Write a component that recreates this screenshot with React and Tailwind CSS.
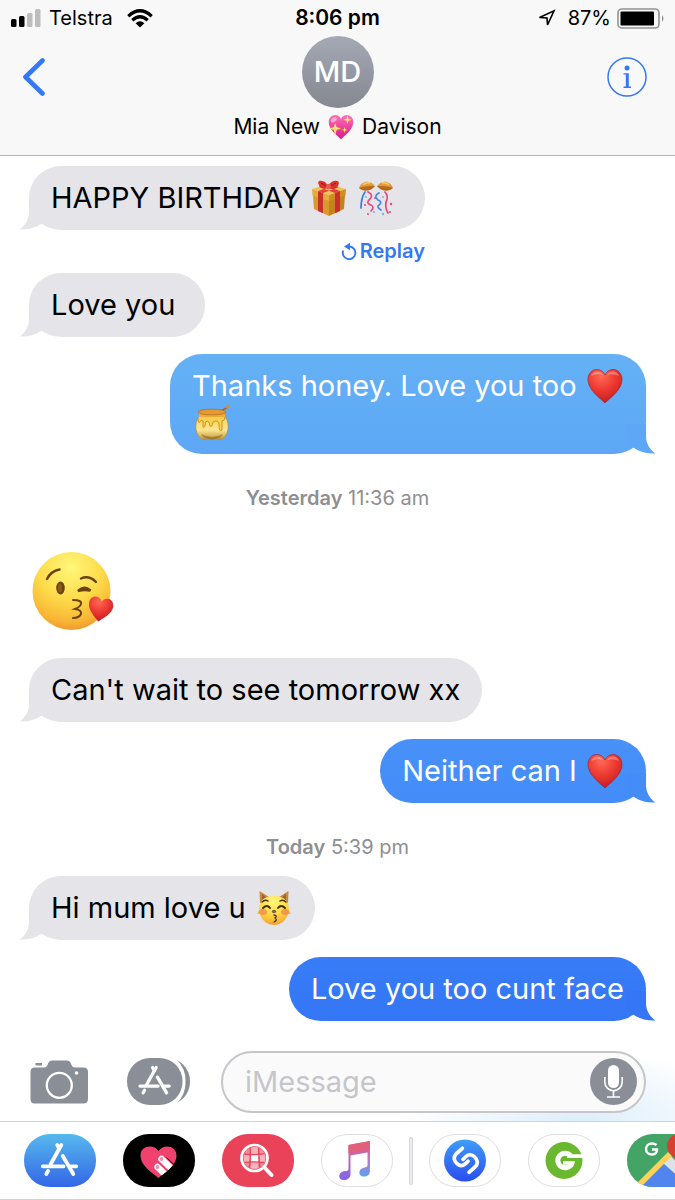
import React from "react";

/* Gradients shared by the emoji and app icons. */
function SharedDefs() {
  return (
    <svg className="absolute h-0 w-0" aria-hidden="true">
      <defs>
        <radialGradient id="heartRed" cx="0.4" cy="0.2" r="0.9">
          <stop offset="0" stopColor="#ff6a55" />
          <stop offset="0.45" stopColor="#ee3a31" />
          <stop offset="1" stopColor="#b91620" />
        </radialGradient>
        <linearGradient id="heartPink" x1="0" y1="0" x2="0" y2="1">
          <stop offset="0" stopColor="#ff6fb5" />
          <stop offset="1" stopColor="#d9198c" />
        </linearGradient>
        <radialGradient id="faceYellow" cx="0.48" cy="0.2" r="0.82">
          <stop offset="0" stopColor="#fff77a" />
          <stop offset="0.5" stopColor="#fddb4a" />
          <stop offset="0.85" stopColor="#f8b434" />
          <stop offset="1" stopColor="#ee9430" />
        </radialGradient>
        <linearGradient id="honeyBody" x1="0" y1="0" x2="0" y2="1">
          <stop offset="0" stopColor="#fbd65c" />
          <stop offset="0.55" stopColor="#fbe690" />
          <stop offset="1" stopColor="#b98a2e" />
        </linearGradient>
        <linearGradient id="storeBlue" x1="0" y1="0" x2="0" y2="1">
          <stop offset="0" stopColor="#56b9ee" />
          <stop offset="1" stopColor="#3366e6" />
        </linearGradient>
        <linearGradient id="shazamBlue" x1="0" y1="0" x2="0" y2="1">
          <stop offset="0" stopColor="#3f9df8" />
          <stop offset="1" stopColor="#2b4df0" />
        </linearGradient>
        <linearGradient id="noteLeft" x1="0" y1="0" x2="0" y2="1">
          <stop offset="0" stopColor="#e2607c" />
          <stop offset="0.5" stopColor="#b56ac0" />
          <stop offset="1" stopColor="#8064f0" />
        </linearGradient>
        <linearGradient id="noteRight" x1="0" y1="0" x2="0" y2="1">
          <stop offset="0" stopColor="#e2607c" />
          <stop offset="0.5" stopColor="#b080c8" />
          <stop offset="1" stopColor="#58a0f0" />
        </linearGradient>
      </defs>
    </svg>
  );
}

function Emoji({ label, children, small }) {
  return (
    <svg
      role="img"
      aria-label={label}
      viewBox="0 0 36 36"
      className={small ? "inline-block h-[26px] w-[26px] align-middle" : "mr-px ml-0.5 inline-block h-9 w-9 align-top"}
    >
      {children}
    </svg>
  );
}

const HEART = "M18 35 C13 30 1 22 1 11.500 C1 5.500 5 1.500 9.800 1.500 C13.500 1.500 16.600 3.500 18 7 C19.400 3.500 22.500 1.500 26.200 1.500 C31 1.500 35 5.500 35 11.500 C35 22 23 30 18 35Z";

function RedHeart() {
  return (
    <Emoji label="red heart">
      <path d={HEART} fill="url(#heartRed)" stroke="#a11a20" strokeWidth="0.6" />
      <path d="M4 8 Q6 3.500 10 3.500 Q14 3.500 16 7 Q10 5 4 8Z M20 7 Q22 3.500 26 3.500 Q30 3.500 32 8 Q26 5 20 7Z" fill="#fff" opacity="0.3" />
    </Emoji>
  );
}

function SparklingHeart() {
  return (
    <Emoji label="sparkling heart" small>
      <path d={HEART} fill="url(#heartPink)" />
      <ellipse cx="8" cy="8" rx="4.500" ry="3" fill="#fff" opacity="0.45" transform="rotate(-35 8 8)" />
      <g fill="#ffe36a">
        <path d="M10 12 L12 18 L18 20 L12 22 L10 29 L8 22 L2 20 L8 18Z" />
        <path d="M27 2 L28.500 6.500 L33 8 L28.500 9.500 L27 14 L25.500 9.500 L21 8 L25.500 6.500Z" />
        <path d="M23 18 L24 21 L27 22 L24 23 L23 26 L22 23 L19 22 L22 21Z" />
      </g>
    </Emoji>
  );
}

function Gift() {
  return (
    <Emoji label="wrapped gift">
      <path d="M2 15 L18 20 V36 L3 29Z" fill="#d99a2c" />
      <path d="M34 15 L18 20 V36 L33 29Z" fill="#c5811d" />
      <path d="M1 9 L18 4 L35 9 L18 15Z" fill="#efc35a" />
      <path d="M1 9 L18 15 V21 L1.500 15.500Z" fill="#e6ac3c" />
      <path d="M35 9 L18 15 V21 L34.500 15.500Z" fill="#d08d24" />
      <path d="M7 11 L12 13 V33.200 L7 31Z M24 13 L29 11 V31 L24 33.200Z" fill="#c9302c" />
      <path d="M7 11 L23 5.500 L28 7 L12 13Z M29 11 L13 5.500 L8 7 L24 13Z" fill="#de4438" />
      <path d="M17 8 C12 9 8 8 8 5 C6 2 8 0 11 1 C14 1 16 4 17 6 C19 2 23 0 26 1 C29 1 28 5 26 7 C23 10 20 9 17 8Z" fill="#d9322f" />
      <path d="M10 3 Q13 4 16 7 M25 3 Q22 4 19 7" stroke="#8f1d20" fill="none" />
      <ellipse cx="17.500" cy="6.500" rx="2.500" ry="2.800" fill="#ec5a49" />
    </Emoji>
  );
}

function ConfettiBall() {
  return (
    <Emoji label="confetti ball">
      <path d="M1 8 C3 1 12 -1 17 6 L12 9 C8 8 4 8 1 8Z" fill="#e09b3a" />
      <path d="M35 8 C33 1 24 -1 19 6 L24 9 C28 8 32 8 35 8Z" fill="#e09b3a" />
      <path d="M1 8 C5 12 12 12 17 6 C12 6 6 6 1 8Z M35 8 C31 12 24 12 19 6 C24 6 30 6 35 8Z" fill="#b9691d" />
      <path d="M5 5 Q8 2 12 3 M24 3 Q28 2 31 5" stroke="#f7ca70" fill="none" strokeWidth="1.500" />
      <g fill="none" strokeWidth="1.700" strokeLinecap="round">
        <path d="M7 12 Q3 18 3 28" stroke="#3f79e0" />
        <path d="M10 12 Q16 15 12 19 Q7 23 13 25 Q17 27 13 31" stroke="#e8477d" />
        <path d="M21 13 Q15 16 20 20 Q25 22 21 25 Q18 27 23 30" stroke="#4a84e8" />
        <path d="M27 12 Q31 16 28 22 Q27 28 30 33" stroke="#e8477d" />
      </g>
      <g fill="#e8477d">
        <circle cx="7" cy="25" r="1" />
        <circle cx="17" cy="18" r="1" />
        <circle cx="33" cy="24" r="1.200" />
        <circle cx="32" cy="32" r="1" />
        <circle cx="10" cy="34" r="1" />
      </g>
      <g fill="#6bbcf0">
        <circle cx="25" cy="17" r="1" />
        <circle cx="16" cy="32" r="1.100" />
        <circle cx="25" cy="34" r="1.200" />
        <circle cx="8" cy="17" r="1" />
      </g>
    </Emoji>
  );
}

function HoneyPot() {
  return (
    <Emoji label="honey pot">
      <path d="M27 7 L34 3" stroke="#9a6b35" strokeWidth="1.800" />
      <ellipse cx="34" cy="2.500" rx="2.500" ry="1.700" fill="#c39150" transform="rotate(-30 34 2.500)" />
      <path d="M5 13 C0 18 1 32 8 35 C14 37.500 22 37.500 28 35 C35 32 36 18 31 13Z" fill="url(#honeyBody)" stroke="#b8842d" strokeWidth="0.600" />
      <path d="M5 8 V14 Q18 18 31 14 V8Z" fill="#f0a93a" />
      <ellipse cx="18" cy="8" rx="14" ry="2.800" fill="#e69a32" stroke="#bd6b20" strokeWidth="0.800" />
      <path d="M4 13 Q4 20 6 18 Q7 15 9 17 V23 Q11 25 11.500 18 Q15 15 16 22 Q18 24 19 18 Q24 15 25 20 Q25 29 28 26 V17 Q31 17 31 13" fill="#fbd24d" stroke="#c68b25" strokeWidth="0.900" />
      <path d="M7 30 Q18 36 29 30 Q27 35 18 35.500 Q9 35 7 30Z" fill="#805516" opacity="0.5" />
    </Emoji>
  );
}

function KissingCat() {
  return (
    <Emoji label="kissing cat">
      <path d="M4 14 L3.500 1 L13 7Z M32 14 L32.500 1 L23 7Z" fill="#c98a3d" />
      <path d="M6 10 L6 4 L11 8Z M30 10 L30 4 L25 8Z" fill="#9c6236" />
      <path d="M18 6 C8 6 3 11 3 20 L1 24 L4 24 C6 31 12 35 18 35 C24 35 30 31 32 24 L35 24 L33 20 C33 11 28 6 18 6Z" fill="url(#faceYellow)" />
      <ellipse cx="7" cy="22" rx="4" ry="3" fill="#f07b4c" opacity="0.65" />
      <ellipse cx="29" cy="22" rx="4" ry="3" fill="#f07b4c" opacity="0.65" />
      <g fill="none" stroke="#4a2e12" strokeWidth="1.500" strokeLinecap="round">
        <path d="M6 12 Q9 9 12 11 M24 11 Q27 9 30 12" />
        <path d="M7 18 Q11 14 14 18 M22 18 Q25 14 29 18" strokeWidth="2" />
        <path d="M18 25 Q22 26 19 28 Q22 30 18 32" strokeWidth="1.300" />
      </g>
      <ellipse cx="18" cy="21.500" rx="2.200" ry="1.800" fill="#83604b" />
    </Emoji>
  );
}

function KissFace() {
  return (
    <svg role="img" aria-label="face blowing a kiss" viewBox="0 0 82 80" className="h-20 w-[82px]">
      <circle cx="39.500" cy="40" r="39" fill="url(#faceYellow)" />
      <g fill="none" stroke="#6b4210" strokeLinecap="round">
        <path d="M15 28 Q19 20 27.500 18.500" strokeWidth="2.400" />
        <path d="M49 27.500 Q57 24 64 31" strokeWidth="2.400" />
        <path d="M46 40 Q52 34 58.500 39.500 Q52 38 46 40Z" strokeWidth="2.600" />
        <path d="M41 49 Q50 49 49 53 Q48 56 43 58 Q50 59 49 63 Q47 67 41 67" strokeWidth="2" />
      </g>
      <ellipse cx="28.500" cy="37" rx="4.300" ry="6.500" fill="#6b4210" />
      <ellipse cx="28" cy="37" rx="2" ry="4.500" fill="#8e5a1b" />
      <path transform="translate(55.500 45.500) rotate(10 13 12) scale(0.72)" d={HEART} fill="url(#heartRed)" />
    </svg>
  );
}

function Tail({ side }) {
  return (
    <svg
      aria-hidden="true"
      viewBox="0 0 30 30"
      className={
        side === "in"
          ? "absolute bottom-0 -left-2.5 h-[30px] w-[30px]"
          : "absolute -right-2.5 bottom-0 h-[30px] w-[30px] -scale-x-100"
      }
      fill="currentColor"
    >
      <path d="M10 0 V12 C10 19 6.500 25.500 0.500 29.500 C8 30 16 28 22 24 L30 20 V0Z" />
    </svg>
  );
}

function Incoming({ children, className = "mt-[17px]" }) {
  return (
    <div className={"flex justify-start " + className}>
      <div className="relative max-w-[78%] rounded-[32px] bg-[#e5e4e9] px-[22px] py-3.5 text-[#e5e4e9]">
        <Tail side="in" />
        <p className="relative text-[29px] leading-9 whitespace-pre-wrap text-black">{children}</p>
      </div>
    </div>
  );
}

function Outgoing({ children, tone }) {
  return (
    <div className="mt-[17px] flex justify-end">
      <div className={"relative max-w-[476px] rounded-[32px] px-[22px] py-3.5 " + tone}>
        <Tail side="out" />
        <p className="relative text-[29px] leading-9 text-white">{children}</p>
      </div>
    </div>
  );
}

function Stamp({ day, time }) {
  return (
    <p className="mt-8 text-center text-xl leading-6 text-[#8e8e93]">
      <span className="font-semibold">{day}</span> {time}
    </p>
  );
}

function StoreGlyph({ transform }) {
  return (
    <g transform={transform} fill="none" stroke="#fff" strokeWidth="3.800" strokeLinecap="round">
      <path d="M18.800 32.300 H39.500 M46.500 32.300 H52.300" />
      <path d="M37.300 11 L26.500 30.500 M24 37 L22.300 40" />
      <path d="M33.200 11 L35.300 14.500 M38.800 22 L49.300 40" />
    </g>
  );
}

function StatusBar() {
  return (
    <div className="grid h-9 grid-cols-3 items-center text-xl text-black">
      <div className="flex items-center gap-2 pl-[11px]">
        <svg viewBox="0 0 30 18" className="h-[18px] w-[30px]" aria-label="Signal strength">
          <rect x="0" y="10" width="5.500" height="8" rx="1.500" />
          <rect x="8" y="7" width="5.500" height="11" rx="1.500" />
          <rect x="16" y="4" width="5.500" height="14" rx="1.500" fill="#bdbdbf" />
          <rect x="24" y="0" width="5.500" height="18" rx="1.500" fill="#bdbdbf" />
        </svg>
        <span>Telstra</span>
        <svg viewBox="0 0 26 19" className="ml-1.5 h-[19px] w-[26px]" fill="none" stroke="#000" strokeWidth="3.300" aria-label="Wi-Fi">
          <path d="M1.300 7.200 Q13 -3.500 24.700 7.200" />
          <path d="M5.300 11.300 Q13 4.300 20.700 11.300" />
          <path d="M13 18.500 L8.600 14.200 Q13 10.500 17.400 14.200Z" fill="#000" stroke="none" />
        </svg>
      </div>
      <span className="text-center text-[21px] font-semibold">8:06 pm</span>
      <div className="flex items-center justify-end pr-2.5">
        <svg viewBox="0 0 18 18" className="mr-3 h-[18px] w-[18px]" aria-label="Location">
          <path d="M1.500 8.500 L16 1.800 L9.500 16 L9 9Z" fill="none" stroke="#000" strokeWidth="1.600" />
        </svg>
        <span>87%</span>
        <svg viewBox="0 0 48 21" className="ml-1.5 h-[21px] w-12" aria-label="Battery">
          <rect x="1" y="1" width="41" height="19" rx="4" fill="none" stroke="#929294" strokeWidth="1.600" />
          <rect x="3.500" y="3.500" width="33.500" height="14" rx="1" />
          <path d="M45 7 Q48 10.500 45 14Z" fill="#929294" />
        </svg>
      </div>
    </div>
  );
}

function Header() {
  return (
    <header className="border-b border-[#b6b6b9] bg-[#f8f8f8]">
      <StatusBar />
      <div className="grid grid-cols-[80px_1fr_80px] items-start">
        <button type="button" aria-label="Back" className="flex h-[82px] items-center pl-[22px] text-[#3478f6]">
          <svg viewBox="0 0 24 38" className="h-[38px] w-6" fill="none" stroke="currentColor" strokeWidth="4.600" strokeLinecap="round" strokeLinejoin="round">
            <path d="M20.500 2.500 L3.500 19 L20.500 35.500" />
          </svg>
        </button>
        <div className="flex flex-col items-center">
          <div className="flex h-[72px] w-[72px] items-center justify-center rounded-full bg-gradient-to-b from-[#a5a9b5] to-[#858891] text-[29px] font-medium text-white">
            MD
          </div>
          <h1 className="flex h-[47px] items-start gap-2 pt-1.5 text-[21px] leading-[26px] text-black">
            <span>Mia New</span>
            <SparklingHeart />
            <span>Davison</span>
          </h1>
        </div>
        <button type="button" aria-label="Details" className="flex h-[82px] items-center justify-end pr-7 text-[#3478f6]">
          <svg viewBox="0 0 40 40" className="h-10 w-10">
            <circle cx="20" cy="20" r="19" fill="none" stroke="currentColor" strokeWidth="1.500" />
            <circle cx="20" cy="11" r="2.500" fill="currentColor" />
            <path d="M16.500 16.200 H21.800 V29.600 H24 V31 H16.500 V29.600 H18.800 V17.600 H16.500Z" fill="currentColor" />
          </svg>
        </button>
      </div>
    </header>
  );
}

function Composer() {
  return (
    <div className="flex h-[79px] items-center bg-[radial-gradient(ellipse_180px_70px_at_86%_100%,#ddeefb,transparent)] pr-[29px] pl-[30px]">
      <button type="button" aria-label="Camera">
        <svg viewBox="0 0 58 44" className="h-11 w-[58px]">
          <path d="M5.500 3 H12 V5.500 H5.500Z" fill="#8a8e97" />
          <path d="M4.500 7.500 H14 Q16.500 7.500 17.500 5 L18.500 2.500 Q19.500 0.500 22 0.500 H37 Q39.500 0.500 40.500 2.500 L41.500 5 Q42.500 7.500 45 7.500 H53.500 Q58 7.500 58 12 V39 Q58 43.500 53.500 43.500 H4.500 Q0.500 43.500 0.500 39 V12 Q0.500 7.500 4.500 7.500Z" fill="#8a8e97" />
          <circle cx="29.300" cy="25.300" r="12.500" fill="none" stroke="#fff" strokeWidth="2.300" />
          <circle cx="46.500" cy="13" r="1.800" fill="#fff" />
        </svg>
      </button>
      <button type="button" aria-label="Apps" className="ml-[39px]">
        <svg viewBox="0 0 63 47" className="h-[47px] w-[63px]">
          <rect x="14" y="0" width="49" height="47" rx="23" fill="#8a8e97" />
          <rect x="-20" y="-6" width="78.500" height="59" rx="28" fill="#fff" />
          <rect x="0" y="0" width="55.500" height="47" rx="23" fill="#8a8e97" />
          <StoreGlyph transform="translate(-3.300 0) scale(0.87)" />
        </svg>
      </button>
      <div className="ml-[31px] flex h-[62px] min-w-0 flex-1 items-center rounded-full border-2 border-[#c6c6ca] bg-[#fafafa] pr-[7px] pl-[22px]">
        <input
          type="text"
          aria-label="iMessage"
          placeholder="iMessage"
          className="min-w-0 flex-1 bg-transparent text-[29px] leading-9 text-black outline-none placeholder:text-[#c6c6ca]"
        />
        <button type="button" aria-label="Record audio">
          <svg viewBox="0 0 47 47" className="h-[47px] w-[47px]">
            <circle cx="23.500" cy="23.500" r="23.500" fill="#8a8e97" />
            <rect x="18" y="7" width="11" height="23" rx="5.500" fill="#fff" />
            <path d="M14.800 19 V24 A8.700 8.700 0 0 0 32.200 24 V19 M23.500 33 V39 M17 39 H30" fill="none" stroke="#fff" strokeWidth="1.600" />
          </svg>
        </button>
      </div>
    </div>
  );
}

function AppPill({ label, outlined, children }) {
  return (
    <button type="button" aria-label={label} className="h-[53px] w-[72px] shrink-0">
      <svg viewBox="0 0 72 53" className="h-[53px] w-[72px]">
        {outlined && <rect x="0.500" y="0.500" width="71" height="52" rx="26" fill="#fff" stroke="#dedee1" />}
        {children}
      </svg>
    </button>
  );
}

function AppStrip() {
  return (
    <nav aria-label="iMessage apps" className="flex h-[79px] items-center gap-4 overflow-hidden border-y border-[#d2d2d5] bg-white pl-6">
      <div className="flex gap-[27px]">
        <AppPill label="App Store">
          <rect width="72" height="53" rx="26" fill="url(#storeBlue)" />
          <StoreGlyph />
        </AppPill>
        <AppPill label="Digital Touch">
          <rect width="72" height="53" rx="26" fill="#000" />
          <clipPath id="touchHeart">
            <path d="M35.500 44 C31 40 17.500 32 17.500 21.500 C17.500 12 30 9.500 35.500 17 C41 9.500 53.500 12 53.500 21.500 C53.500 32 40 40 35.500 44Z" />
          </clipPath>
          <g clipPath="url(#touchHeart)">
            <rect width="72" height="53" fill="#f0416f" />
            <g strokeLinecap="round" fill="none">
              <path d="M38.500 25 L56 42 M34.500 33 L50 48" stroke="#fff" strokeWidth="6.500" />
              <path d="M44 24 L60 39" stroke="#000" strokeWidth="1" />
              <path d="M35 27 L53 46" stroke="#f0416f" strokeWidth="1" />
            </g>
            <circle cx="38.500" cy="25" r="1.900" fill="#f58cab" />
            <circle cx="34.500" cy="33" r="1.900" fill="#f58cab" />
          </g>
        </AppPill>
        <AppPill label="Image search">
          <rect width="72" height="53" rx="26" fill="#ea4259" />
          <clipPath id="lens">
            <circle cx="32.500" cy="24" r="11" />
          </clipPath>
          <g clipPath="url(#lens)">
            <rect x="20" y="12" width="26" height="26" fill="#f6b3ba" />
            <path d="M20 12 H28 V20 H20Z M36 13 H45 V20 H36Z M21 28 H29 V37 H21Z M36 28 H45 V36 H36Z" fill="#f08c98" />
            <path d="M29 21 H36 V28 H29Z" fill="#fff" />
            <path d="M28 12 Q29 24 27 36 M36.500 12 Q37 24 38 36 M20 19.500 Q32 22 46 19 M20 28.500 Q32 27 46 29" stroke="#ea4259" strokeWidth="1.400" fill="none" />
          </g>
          <circle cx="32.500" cy="24" r="13" fill="none" stroke="#fff" strokeWidth="2.700" />
          <path d="M42.500 33.500 L49.500 41" stroke="#fff" strokeWidth="4" strokeLinecap="round" />
        </AppPill>
        <AppPill label="Music" outlined>
          <path d="M27.500 11 L49 7 V18 L29.500 21.500 V40 C29.500 44 26 46 23 46 C16 46 17 37.500 24 37 Q27.500 37 27.500 35Z" fill="url(#noteLeft)" />
          <path d="M46.500 12 H49 V36.500 C49 41 46 42.500 43 42.500 C36.500 42.500 37 34.500 43.500 33.500 Q46.500 33 46.500 31Z" fill="url(#noteRight)" />
          <path d="M27.500 11 L49 7 V15 L27.500 19.500Z" fill="#e2607c" />
        </AppPill>
      </div>
      <div className="h-12 w-1 shrink-0 rounded-full border border-[#d6d6da] bg-[#ececef]" />
      <div className="flex gap-[27px]">
        <AppPill label="Shazam" outlined>
          <circle cx="36" cy="26.500" r="21" fill="url(#shazamBlue)" />
          <g fill="none" stroke="#fff" strokeWidth="3.700" strokeLinecap="round" strokeLinejoin="round">
            <path d="M33.300 14.300 L27.500 19.500 C23.500 23.500 25.500 27.500 28 29.700 C31 32.500 34 32 36.500 29.700 L39 27.300" />
            <path d="M40 38.300 L46 33 C50 29 48 25 45.500 22.800 C43 20.300 39.500 20 37 22.500 L34 25.300" />
          </g>
        </AppPill>
        <AppPill label="Groupon" outlined>
          <circle cx="36" cy="26.500" r="18.500" fill="#6ab82e" />
          <path d="M42.500 21.500 A7.300 7.300 0 1 0 43.500 30" fill="none" stroke="#fff" strokeWidth="5" />
          <path d="M39 20.300 H55 V24 H39Z M35 27.300 H47 Q46.500 31 44.500 33 L41 30.800 H35Z" fill="#fff" />
        </AppPill>
        <AppPill label="Google Maps">
          <clipPath id="mapPill">
            <rect width="72" height="53" rx="26" />
          </clipPath>
          <g clipPath="url(#mapPill)">
            <rect width="72" height="53" fill="#43a466" />
            <path d="M14 53 L42 23 L72 53Z" fill="#4f85ec" />
            <path d="M36 29 L44 22 L60 40 L54 45Z" fill="#dde2e8" />
            <path d="M12 51 L43 20" stroke="#fbd35c" strokeWidth="5.500" />
            <path d="M50 26 C42 20 40 16 40 12 C40 5 46 0 52 0 V26Z" fill="#d6402e" />
            <path d="M29.500 11 Q27.500 9.500 25 9.500 C21.500 9.500 19 12 19 15 C19 18 21.500 20.500 25 20.500 C28.500 20.500 30 18 30 15.500 H25" fill="none" stroke="#fff" strokeWidth="2.400" />
          </g>
        </AppPill>
      </div>
    </nav>
  );
}

export default function App() {
  return (
    <div className="flex min-h-screen flex-col overflow-x-hidden bg-white font-['Inter','Liberation_Sans',sans-serif]">
      <SharedDefs />
      <Header />
      <main className="flex-1 px-[29px] pt-2.5">
        <Incoming className="">
          HAPPY BIRTHDAY <Gift />{" "}
          <ConfettiBall />{" "}
        </Incoming>
        <div className="mt-[9px] flex w-[396px] justify-end">
          <button type="button" className="flex items-center gap-0.5 text-xl leading-6 font-semibold text-[#3478f6]">
            <svg viewBox="0 0 17 18" className="h-[18px] w-[17px]" fill="none" stroke="currentColor" strokeWidth="1.900" aria-hidden="true">
              <path d="M2.200 8.500 A6.300 6.300 0 1 0 8.500 4.500" />
              <path d="M3 4.500 L9 0.800 V8.200Z" fill="currentColor" stroke="none" />
            </svg>
            Replay
          </button>
        </div>
        <Incoming className="mt-2.5">Love you{" "}</Incoming>
        <Outgoing tone="bg-gradient-to-b from-[#65b1f5] to-[#5da7f6] text-[#5da7f6]">
          Thanks honey. Love you too <RedHeart /> <HoneyPot />
        </Outgoing>
        <Stamp day="Yesterday" time="11:36 am" />
        <div className="mt-[17px] pt-6 pb-2.5 pl-[3px]">
          <KissFace />
        </div>
        <Incoming>Can't wait to see tomorrow xx</Incoming>
        <Outgoing tone="bg-gradient-to-b from-[#4891f8] to-[#448cf8] text-[#448cf8]">
          Neither can I <RedHeart />
        </Outgoing>
        <Stamp day="Today" time="5:39 pm" />
        <Incoming>
          Hi mum love u <KissingCat />
        </Incoming>
        <Outgoing tone="bg-gradient-to-b from-[#387cf7] to-[#3476f5] text-[#3476f5]">Love you too cunt face</Outgoing>
      </main>
      <footer>
        <Composer />
        <AppStrip />
      </footer>
    </div>
  );
}
